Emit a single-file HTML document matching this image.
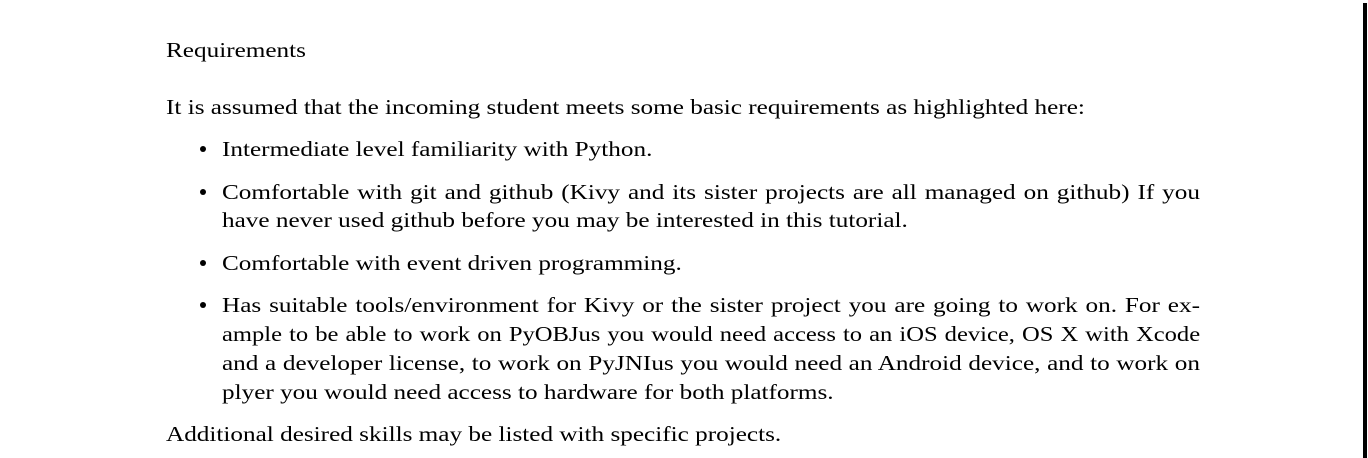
<!DOCTYPE html>
<html><head><meta charset="utf-8"><style>
html,body{margin:0;padding:0;background:#fff;}
body{width:1368px;height:458px;position:relative;overflow:hidden;font-family:"Liberation Serif",serif;font-size:21px;color:#000;}
.l{position:absolute;white-space:nowrap;line-height:24px;transform:scaleX(1.2);transform-origin:0 0;}
.j{text-align:justify;text-align-last:justify;width:815px;white-space:normal;}
.n{white-space:nowrap;transform:scaleX(1.17);width:836px;}
.b{position:absolute;width:6px;height:6px;border-radius:50%;background:#000;left:200px;}
.bar{position:absolute;left:1363px;top:3px;width:4px;height:455px;background:#000;}
</style></head><body>
<div class="bar"></div>
<div class="l" style="left:166px;top:38px">Requirements</div>
<div class="l" style="left:166px;top:95px">It is assumed that the incoming student meets some basic requirements as highlighted here:</div>
<div class="b" style="top:146px"></div>
<div class="l" style="left:222px;top:137px">Intermediate level familiarity with Python.</div>
<div class="b" style="top:189px"></div>
<div class="l j" style="left:222px;top:180px">Comfortable with git and github (Kivy and its sister projects are all managed on github) If you</div>
<div class="l" style="left:222px;top:208px">have never used github before you may be interested in this tutorial.</div>
<div class="b" style="top:260px"></div>
<div class="l" style="left:222px;top:251px">Comfortable with event driven programming.</div>
<div class="b" style="top:302px"></div>
<div class="l j" style="left:222px;top:293px">Has suitable tools/environment for Kivy or the sister project you are going to work on. For ex-</div>
<div class="l j n" style="left:222px;top:322px">ample to be able to work on PyOBJus you would need access to an iOS device, OS X with Xcode</div>
<div class="l j" style="left:222px;top:351px">and a developer license, to work on PyJNIus you would need an Android device, and to work on</div>
<div class="l" style="left:222px;top:380px">plyer you would need access to hardware for both platforms.</div>
<div class="l" style="left:166px;top:422px">Additional desired skills may be listed with specific projects.</div>
</body></html>
